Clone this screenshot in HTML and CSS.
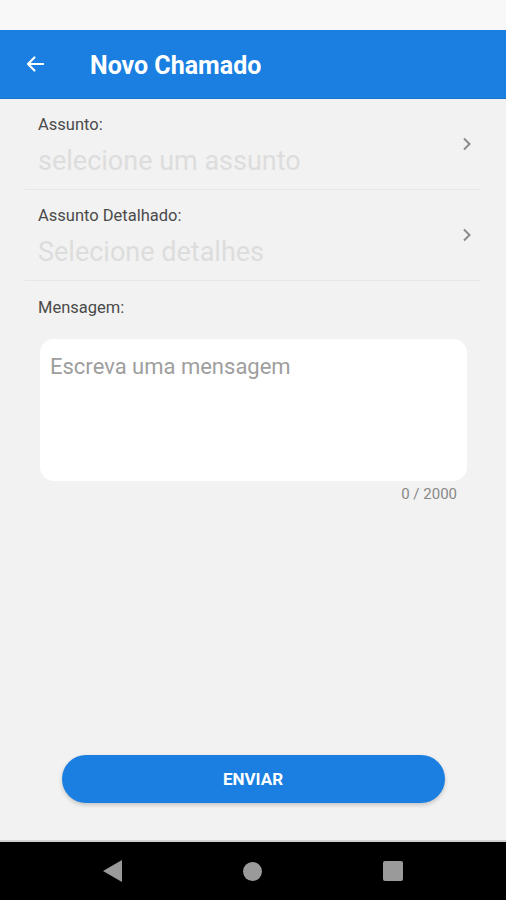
FILE: index.html
```html
<!DOCTYPE html>
<html lang="pt">
<head>
    <meta charset="UTF-8">
    <meta name="viewport" content="width=device-width, initial-scale=1.0">
    <title>Novo Chamado</title>
    <link rel="stylesheet" href="styles.css">
</head>
<body>
    <div class="phone">
        <div class="status-bar"></div>

        <header class="app-bar">
            <svg class="back" width="26" height="26" viewBox="0 0 24 24">
                <path d="M19.5 12H5.5M11.5 6l-6 6 6 6" fill="none" stroke="#fff" stroke-width="2" stroke-linecap="round" stroke-linejoin="round"/>
            </svg>
            <h1>Novo Chamado</h1>
        </header>

        <main class="content">
            <div class="field">
                <div class="field-text">
                    <label>Assunto:</label>
                    <div class="placeholder">selecione um assunto</div>
                </div>
                <svg class="chevron" width="12" height="16" viewBox="0 0 12 16">
                    <path d="M3 2.5l5.5 5.5L3 13.5" fill="none" stroke="#8a8a8a" stroke-width="2"/>
                </svg>
            </div>

            <div class="field">
                <div class="field-text">
                    <label>Assunto Detalhado:</label>
                    <div class="placeholder">Selecione detalhes</div>
                </div>
                <svg class="chevron" width="12" height="16" viewBox="0 0 12 16">
                    <path d="M3 2.5l5.5 5.5L3 13.5" fill="none" stroke="#8a8a8a" stroke-width="2"/>
                </svg>
            </div>

            <div class="message">
                <label>Mensagem:</label>
                <textarea placeholder="Escreva uma mensagem" maxlength="2000"></textarea>
                <div class="counter">0 / 2000</div>
            </div>

            <div class="spacer"></div>

            <div class="button-container">
                <button type="button">ENVIAR</button>
            </div>
        </main>

        <nav class="nav-bar">
            <span class="nav-back"></span>
            <span class="nav-home"></span>
            <span class="nav-recent"></span>
        </nav>
    </div>
</body>
</html>
```

FILE: styles.css
```css
body {
    margin: 0;
    font-family: Roboto, "Liberation Sans", sans-serif;
    background-color: #f2f2f2;
}

.phone {
    width: 506px;
    height: 900px;
    display: flex;
    flex-direction: column;
}

.status-bar {
    height: 30px;
    background-color: #f8f8f8;
}

.app-bar {
    height: 68px;
    background-color: #1a7fe1;
    display: flex;
    align-items: center;
    border-bottom: 1px solid #1873cc;
}

.back {
    margin-left: 22px;
    margin-right: 42px;
}

.app-bar h1 {
    margin: 0;
    padding-top: 3px;
    color: #ffffff;
    font-size: 25px;
    font-weight: bold;
}

.content {
    flex: 1;
    display: flex;
    flex-direction: column;
    padding: 0 25px;
}

.field {
    display: flex;
    align-items: center;
    border-bottom: 1px solid #e6e6e6;
    height: 90px;
}

.field-text {
    flex: 1;
    align-self: flex-start;
    padding: 16px 0 0 13px;
}

.field label, .message label {
    display: block;
    font-size: 16.5px;
    color: #4a4a4a;
}

.placeholder {
    font-size: 27px;
    color: #dddddd;
    margin-top: 11px;
}

.chevron {
    margin-right: 8px;
}

.message {
    padding: 17px 13px 0;
}

textarea {
    display: block;
    box-sizing: border-box;
    width: 427px;
    height: 142px;
    margin: 22px 0 0 2px;
    padding: 15px 10px 10px;
    border: none;
    border-radius: 14px;
    background: #ffffff;
    resize: none;
    font-family: Roboto, "Liberation Sans", sans-serif;
    font-size: 22px;
    outline: none;
}

textarea::placeholder {
    color: #9e9e9e;
}

.counter {
    text-align: right;
    font-size: 15px;
    color: #888888;
    margin-top: 4px;
    margin-right: 11px;
}

.spacer {
    flex: 1;
}

.button-container {
    display: flex;
    justify-content: center;
    padding-bottom: 37px;
}

button {
    width: 383px;
    height: 48px;
    border: none;
    border-radius: 24px;
    background-color: #1a7fe1;
    color: #ffffff;
    font-family: Roboto, "Liberation Sans", sans-serif;
    font-size: 17px;
    font-weight: bold;
    box-shadow: 0 2px 4px rgba(0, 0, 0, 0.2);
    cursor: pointer;
}

.nav-bar {
    height: 58px;
    background-color: #000000;
    border-top: 2px solid #d0d0d0;
    display: flex;
    align-items: center;
    gap: 121px;
    padding-left: 103px;
}

.nav-back {
    width: 0;
    height: 0;
    border-top: 11px solid transparent;
    border-bottom: 11px solid transparent;
    border-right: 19px solid #9a9a9a;
}

.nav-home {
    width: 19px;
    height: 19px;
    border-radius: 50%;
    background-color: #9a9a9a;
}

.nav-recent {
    width: 20px;
    height: 20px;
    border-radius: 2px;
    background-color: #9a9a9a;
}
```
